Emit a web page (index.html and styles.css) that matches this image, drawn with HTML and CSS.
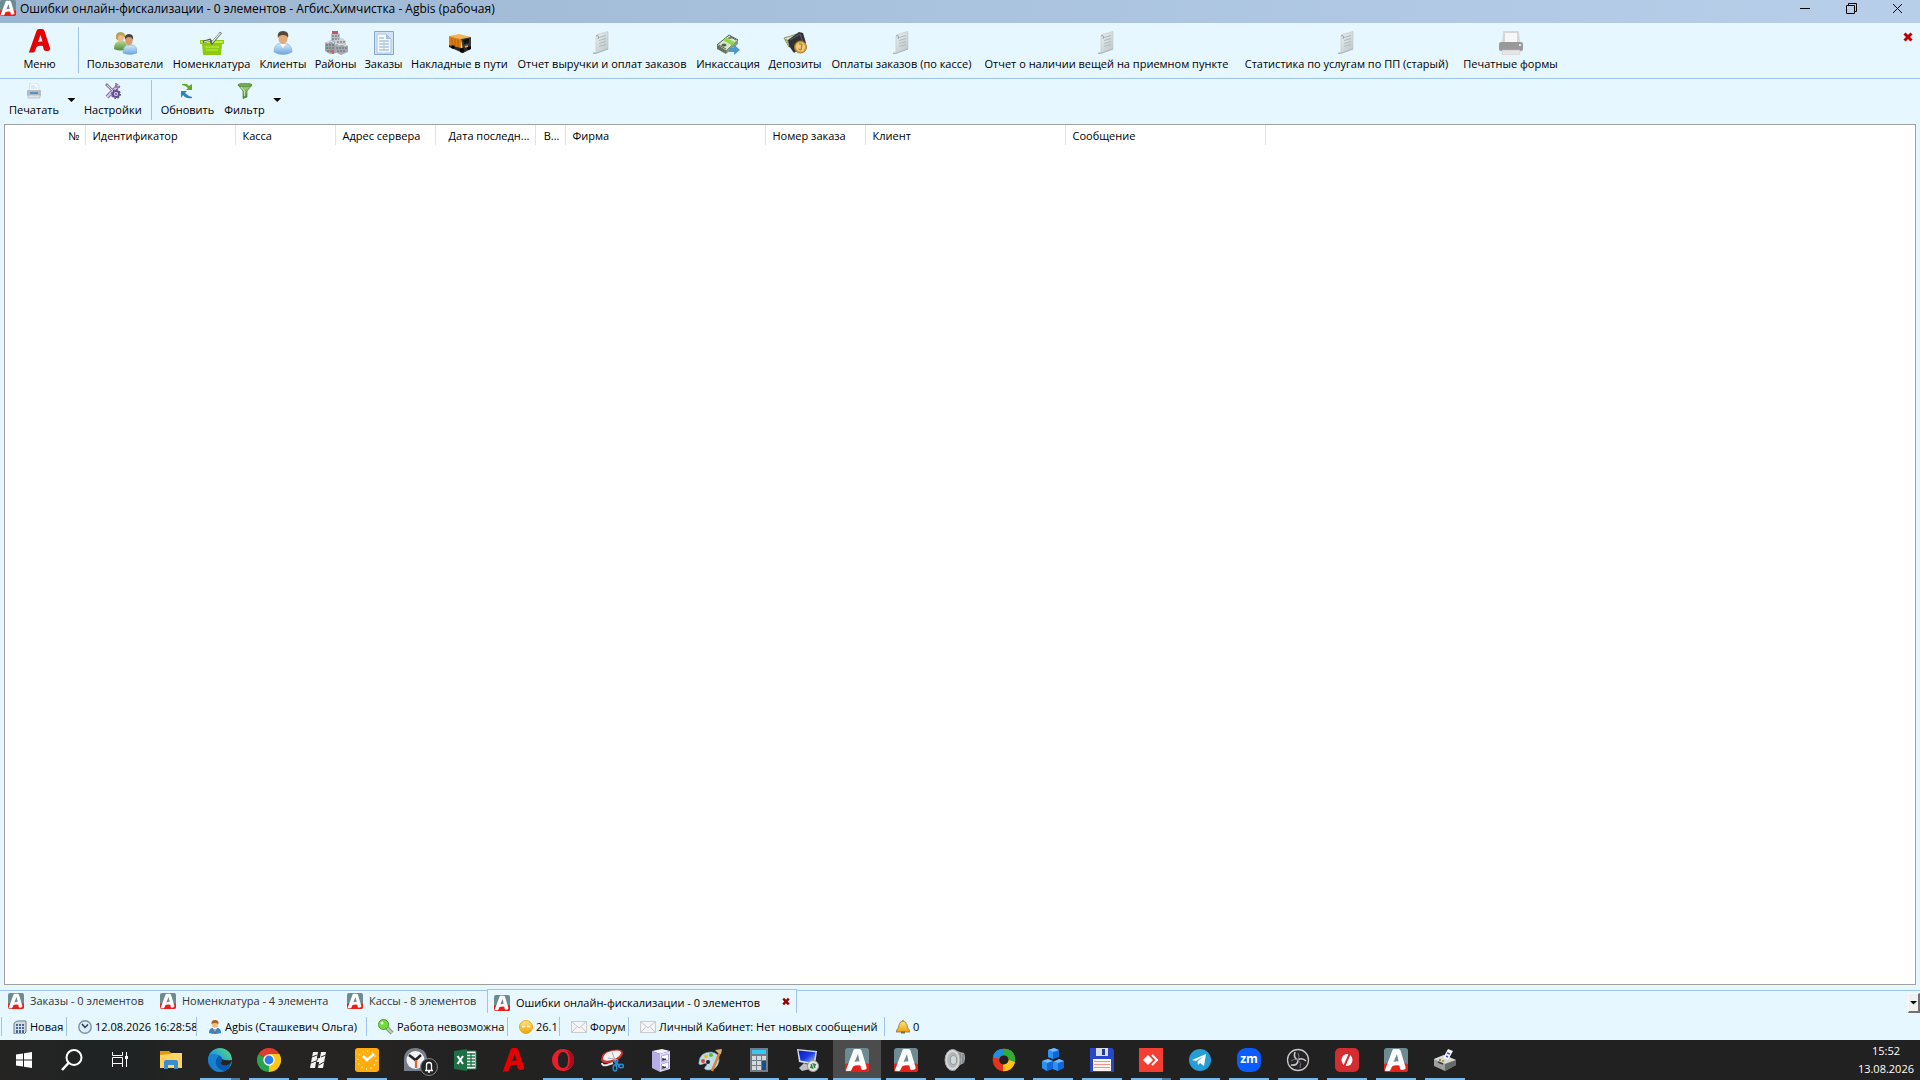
FILE: index.html
```html
<!DOCTYPE html>
<html lang="ru">
  <head>
    <meta charset="UTF-8" />
    <meta name="viewport" content="width=device-width, initial-scale=1.0" />
    <title>Ошибки онлайн-фискализации - Агбис.Химчистка</title>
    <link rel="stylesheet" href="styles.css">
  </head>
  <body>
    <!-- shared icons -->
    <svg class="sprite" aria-hidden="true">
      <defs>
        <linearGradient id="gDoc" x1="0" y1="0" x2="1" y2="1">
          <stop offset="0" stop-color="#f3f6f7" />
          <stop offset="1" stop-color="#b9c3c6" />
        </linearGradient>
        <linearGradient id="gBlue" x1="0" y1="0" x2="0" y2="1">
          <stop offset="0" stop-color="#d3e9fb" />
          <stop offset="1" stop-color="#6ba6dc" />
        </linearGradient>
        <linearGradient id="gGreen" x1="0" y1="0" x2="0" y2="1">
          <stop offset="0" stop-color="#b4d98c" />
          <stop offset="1" stop-color="#4f8c3a" />
        </linearGradient>
        <linearGradient id="gGold" x1="0" y1="0" x2="0" y2="1">
          <stop offset="0" stop-color="#ffe680" />
          <stop offset="1" stop-color="#f0a202" />
        </linearGradient>
        <linearGradient id="gEdge" x1="0" y1="1" x2="1" y2="0">
          <stop offset="0" stop-color="#0a5fc0" />
          <stop offset="0.5" stop-color="#1fa3dc" />
          <stop offset="1" stop-color="#6be05a" />
        </linearGradient>
        <linearGradient id="gScreen" x1="0" y1="0" x2="1" y2="1">
          <stop offset="0" stop-color="#0a18c8" />
          <stop offset="0.5" stop-color="#1a3ce0" />
          <stop offset="1" stop-color="#9cc4ff" />
        </linearGradient>
      </defs>
      <symbol id="logo" viewBox="0 0 24 24">
        <rect width="24" height="24" rx="3" fill="#6f8b92" />
        <path d="M0 16Q12 11 24 16V21Q24 24 21 24H3Q0 24 0 21z" fill="#e8201c" />
        <path d="M1 22L8.500 2Q9 1 10 1H14.500Q16 1 16.500 2.500L21.500 19Q22 21 20.500 21.500L18 22Q16.500 22 16 20.500L15.500 17.500Q11 16.500 8 18.500L6.500 22Q6 23 4.500 23H2Q.6 23 1 22zM13 6L9.500 14Q12 13 14.500 13.500z" fill="#fff" />
      </symbol>
      <symbol id="letter" viewBox="0 0 24 24">
        <path d="M1 23L8.500 2Q9 0 11 0H14Q16 0 16.500 2L22 19Q22.500 21.500 20 22H18Q16 22 15.500 20L15 17Q11 16 8.500 18L7 22Q6.500 23.500 5 23.500H2Q.5 24 1 23zM12.500 6L10 13Q12 12.200 14.500 12.500z" fill="#e60000" />
      </symbol>
      <symbol id="report" viewBox="0 0 24 24">
        <path d="M6 5Q7 3 9 3L18 .5V18L7 22Q5 23.500 3 22L6 21z" fill="url(#gDoc)" stroke="#c2cbce" stroke-width=".7" />
        <path d="M3 22.500Q6 23 8 21.500L18 18" fill="none" stroke="#a9b4b8" />
        <path d="M6 5Q8 3 8.500 6L8 8" fill="none" stroke="#94a3a8" />
        <path d="M9 6.500L16 4.500M9 9.500L16 7.500M9 12.500L16 10.500M9 15.500L16 13.500" stroke="#a8b5ba" stroke-width=".9" />
      </symbol>
      <symbol id="person" viewBox="0 0 24 24">
        <path d="M3 21Q3 13 9 12.500H15Q21 14 21 21Q12 26 3 21z" fill="url(#gBlue)" stroke="#78a7d4" stroke-width=".6" />
        <path d="M9 12.500L12 17L15 12.500z" fill="#fff" />
        <ellipse cx="12" cy="7.500" rx="4.500" ry="5.800" fill="#e0ae7e" />
        <path d="M7 7Q5.500 0 12 0T17 7Q16 4 12 4T7 7z" fill="#5a4636" />
      </symbol>
      <symbol id="mail" viewBox="0 0 16 12">
        <rect x=".5" y=".5" width="15" height="11" fill="#f5f5f5" stroke="#c9cdd0" />
        <path d="M1 1L8 7L15 1M1 11L6 5.500M15 11L10 5.500" fill="none" stroke="#c3c7ca" />
      </symbol>
      <symbol id="redx" viewBox="0 0 10 10">
        <path d="M1.500 1.500L8.500 8.500M8.500 1.500L1.500 8.500" stroke="currentColor" stroke-width="3" />
      </symbol>
    </svg>

    <header class="titlebar">
      <svg class="i16"><use href="#logo" /></svg>
      <h1>Ошибки онлайн-фискализации - 0 элементов - Агбис.Химчистка - Agbis (рабочая)</h1>
      <button aria-label="Свернуть"><svg viewBox="0 0 11 11"><path d="M0 5.500H10" /></svg></button>
      <button aria-label="Восстановить"><svg viewBox="0 0 11 11"><path d="M.5 2.500H8.500V10.500H.5zM2.500 2.500V.5H10.500V8.500H8.500" /></svg></button>
      <button aria-label="Закрыть"><svg viewBox="0 0 11 11"><path d="M1 1L10 10M10 1L1 10" /></svg></button>
    </header>

    <nav class="main-toolbar">
      <button class="tool menu"><svg class="i24"><use href="#letter" /></svg>Меню</button>
      <span class="sep"></span>
      <button class="tool">
        <svg class="i24" viewBox="0 0 24 24">
          <path d="M1 18Q1 11 6 10H11Q14 11 14 18Q7 21 1 18z" fill="url(#gGreen)" />
          <ellipse cx="7.500" cy="6.500" rx="3.500" ry="4.800" fill="#e7bd8b" />
          <path d="M3 8Q2 1 7.500 1T12 7Q10 4 7.500 4Q5 4 5 9z" fill="#b9a35a" />
          <path d="M10 22Q10 15 14 14H20Q24 15 24 22Q17 25 10 22z" fill="url(#gBlue)" stroke="#6f9fce" stroke-width=".5" />
          <ellipse cx="16" cy="9.500" rx="3.700" ry="4.800" fill="#d69f72" />
          <path d="M12 9Q11 3 16 3T20 9Q19 6 16 6T12 9z" fill="#4b4039" />
        </svg>Пользователи
      </button>
      <button class="tool">
        <svg class="i24" viewBox="0 0 24 24">
          <path d="M0 9H24V13H22L21 24H3L2 13H0z" fill="#8ccb10" />
          <path d="M1 10H23V12H1z" fill="#c1ec3d" />
          <path d="M5 16H19M6 19H18" stroke="#b5e33a" stroke-width="1.500" />
          <path d="M3 11L10 9L12 12L21 1.500" fill="none" stroke="#535b60" stroke-width="2.400" />
          <path d="M4 11L10 9.500M12 11.500L20.500 2" stroke="#e7ecef" stroke-width="1.200" />
        </svg>Номенклатура
      </button>
      <button class="tool"><svg class="i24"><use href="#person" /></svg>Клиенты</button>
      <button class="tool">
        <svg class="i24" viewBox="0 0 24 24">
          <path d="M7 3L12 1L16 3V12H7z" fill="#b9bfc4" />
          <path d="M8 0H14V3H8z" fill="#c55560" />
          <path d="M1 12L7 9L12 12V22L6 23L1 20z" fill="#9ca3aa" />
          <path d="M11 9L18 7L22 10V15L11 14z" fill="#cbd0d4" />
          <path d="M11 14L18 12L24 15V21L17 24L11 21z" fill="#a4a9b2" />
          <path d="M2 14H11M2 17H11M3 20H10M12 17H23M13 20H22M8 5H15M8 8H15M13 11H21" stroke="#5d656d" stroke-dasharray="2 1" />
          <path d="M3 12L7 10L10 12M14 14L18 13L22 15" fill="none" stroke="#efefef" />
          <path d="M8 19H10V23H8z" fill="#c4656c" />
        </svg>Районы
      </button>
      <button class="tool">
        <svg class="i24" viewBox="0 0 24 24">
          <path d="M2.500.5H21.500V23.500H2.500z" fill="#d5e4f4" stroke="#85a7cf" />
          <path d="M5 3H14L19 8V22H5z" fill="#f5faff" stroke="#a9c2df" />
          <path d="M14 3V8H19z" fill="#a5c1e3" />
          <path d="M7 7H12M7 10H17M7 13H17M7 16H17M7 19H17" stroke="#8fa9c8" />
          <path d="M12 9V20" stroke="#b4c7df" />
        </svg>Заказы
      </button>
      <button class="tool">
        <svg class="i24" viewBox="0 0 24 24">
          <path d="M1 5L11 3L23 6L13 8z" fill="#f4b54c" />
          <path d="M1 5L13 8V18L1 14z" fill="#df7c14" />
          <path d="M13 8L23 6V17L15 20z" fill="#3c3b3b" />
          <path d="M15 9L21 7.500V12L16 13z" fill="#131313" />
          <path d="M1 14L13 17L23 15V18L15 22L1 16z" fill="#292929" />
          <path d="M4 7V14M7 8V15M10 9V16" stroke="#b75d08" />
          <circle cx="5" cy="16" r="1.800" /><circle cx="14" cy="19.500" r="2.300" /><circle cx="21" cy="17" r="1.800" />
          <path d="M17 16L20 15" stroke="#f2b54b" stroke-width="1.500" />
        </svg>Накладные в пути
      </button>
      <button class="tool"><svg class="i24"><use href="#report" /></svg>Отчет выручки и оплат заказов</button>
      <button class="tool">
        <svg class="i24" viewBox="0 0 24 24">
          <path d="M1 14L13 4L22 9L10 20z" fill="#dbe5cf" stroke="#4c5c48" />
          <path d="M1 14V18L10 23V20z" fill="#65745b" />
          <path d="M10 20V23L22 13V9z" fill="#8c9b80" />
          <path d="M7 9L10 6.500L19 11.500L16 14.500z" fill="#8ed943" />
          <path d="M3 14L10 18M14 5.500L20 9" stroke="#53634e" />
          <ellipse cx="14" cy="7" rx="2" ry="1" fill="#75826a" />
          <ellipse cx="8" cy="14" rx="2.500" ry="1.600" fill="#53634e" />
          <path d="M13 17H18V13.500L24 19L18 24V21H13z" fill="#4b99ce" />
        </svg>Инкассация
      </button>
      <button class="tool">
        <svg class="i24" viewBox="0 0 24 24">
          <path d="M1 7L14 3L17 8L6 16z" fill="#d9dfbb" stroke="#87996a" />
          <path d="M2 9Q5 8 5 12" fill="none" stroke="#6d8452" />
          <path d="M5 9L16 1L20 2L23 12L11 22L6 15z" fill="#303136" />
          <path d="M7 9L17 3L20 11" fill="none" stroke="#63656d" />
          <circle cx="17.500" cy="16" r="6" fill="#d9a441" stroke="#a87625" />
          <circle cx="17.500" cy="16" r="4.500" fill="#f0c979" />
          <path d="M16 13L19 13L18 19L15.500 18" fill="none" stroke="#a37126" />
        </svg>Депозиты
      </button>
      <button class="tool"><svg class="i24"><use href="#report" /></svg>Оплаты заказов (по кассе)</button>
      <button class="tool"><svg class="i24"><use href="#report" /></svg>Отчет о наличии вещей на приемном пункте</button>
      <button class="tool"><svg class="i24"><use href="#report" /></svg>Статистика по услугам по ПП (старый)</button>
      <button class="tool">
        <svg class="i24" viewBox="0 0 24 24">
          <path d="M4 1Q4 0 5 0H19Q20 0 20 1L21 12H3z" fill="#d7d7d7" />
          <path d="M6 2H18V11H6z" fill="#f7f7f7" />
          <path d="M2 11H22Q24 11 24 14V18Q24 20 22 20H2Q0 20 0 18V14Q0 11 2 11z" fill="#999" />
          <path d="M3 19H21V22Q21 24 19 24H5Q3 24 3 22z" fill="#e5e5e5" stroke="#c0c0c0" stroke-width=".5" />
          <circle cx="21" cy="14" r="1" fill="#fff" />
        </svg>Печатные формы
      </button>
      <button class="close-page" aria-label="Закрыть окно"><svg class="i10"><use href="#redx" /></svg></button>
    </nav>

    <div class="page-toolbar">
      <button class="tool print">
        <svg class="i16" viewBox="0 0 16 16">
          <path d="M4 0H10L13 3V8H3z" fill="#f5f9fd" stroke="#c3ced9" stroke-width=".6" />
          <path d="M5 3H9M5 5H11" stroke="#cad6e2" />
          <path d="M2 7H14Q15 7 15 8V12Q15 13 14 13H2Q1 13 1 12V8Q1 7 2 7z" fill="#b3bbc3" />
          <path d="M4 9H12V11H4z" fill="#5793c7" />
          <path d="M2 12H14V15H2z" fill="#e0e4e8" stroke="#a7afb7" stroke-width=".6" />
        </svg>Печатать
      </button>
      <button class="drop" aria-label="Варианты печати"><span class="arrow"></span></button>
      <button class="tool">
        <svg class="i16" viewBox="0 0 16 16">
          <path d="M1 1L9 9" stroke="#8672a8" stroke-width="2.500" />
          <path d="M14 2L2 14" stroke="#8672a8" stroke-width="4" />
          <path d="M14 2L2 14" stroke="#d9c8ee" stroke-width="2" />
          <path d="M11 0V4L15 4" fill="none" stroke="#8672a8" stroke-width="1.500" />
          <path d="M2 2L8 8" stroke="#e4dcf2" />
          <circle cx="11" cy="11" r="3" fill="#e8e0f5" stroke="#62518d" stroke-width="2" />
          <circle cx="11" cy="11" r="4.400" fill="none" stroke="#62518d" stroke-width="1.200" stroke-dasharray="1.800 1.600" />
          <circle cx="11" cy="11" r="1" fill="#62518d" />
        </svg>Настройки
      </button>
      <span class="sep"></span>
      <button class="tool">
        <svg class="i16" viewBox="0 0 16 16">
          <path d="M3 1Q8 0 10 3L13 1V7H7L9 5Q6 2 3 2z" fill="#60a928" />
          <path d="M2 8H8L6 10Q9 13 13 14V15Q7 16 4 12L2 15z" fill="#2e83b6" />
        </svg>Обновить
      </button>
      <button class="tool">
        <svg class="i16" viewBox="0 0 16 16">
          <path d="M1 2L6 8V15.500L10 14V8L15 2z" fill="url(#gGreen)" stroke="#458131" stroke-width=".7" />
          <ellipse cx="8" cy="2" rx="7" ry="1.800" fill="#73ad54" stroke="#458131" stroke-width=".7" />
          <path d="M4 4L7.500 8V13" fill="none" stroke="#c8e5ac" />
        </svg>Фильтр
      </button>
      <button class="drop" aria-label="Варианты фильтра"><span class="arrow"></span></button>
    </div>

    <main class="grid-panel">
      <table>
        <thead>
          <tr>
            <th class="w-num right">№</th>
            <th class="w-id">Идентификатор</th>
            <th class="w-100">Касса</th>
            <th class="w-100">Адрес сервера</th>
            <th class="w-100 right">Дата последн...</th>
            <th class="w-30 right">В...</th>
            <th class="w-200">Фирма</th>
            <th class="w-100">Номер заказа</th>
            <th class="w-200">Клиент</th>
            <th class="w-200">Сообщение</th>
            <td></td>
          </tr>
        </thead>
      </table>
    </main>

    <nav class="tabs">
      <a class="tab" href="#orders"><svg class="i16"><use href="#logo" /></svg>Заказы - 0 элементов</a>
      <a class="tab" href="#items"><svg class="i16"><use href="#logo" /></svg>Номенклатура - 4 элемента</a>
      <a class="tab" href="#desks"><svg class="i16"><use href="#logo" /></svg>Кассы - 8 элементов</a>
      <div class="tab active">
        <svg class="i16"><use href="#logo" /></svg>Ошибки онлайн-фискализации - 0 элементов
        <button aria-label="Закрыть вкладку"><svg viewBox="0 0 10 10"><use href="#redx" /></svg></button>
      </div>
      <button class="tab-list" aria-label="Список вкладок"><span class="arrow"></span></button>
    </nav>

    <footer class="status">
      <span class="cell">
        <svg viewBox="0 0 14 14">
          <path d="M1 3L4 1H13V12L11 14H1z" fill="#d3dae2" stroke="#707b89" />
          <path d="M3 4H11V13H3z" fill="#46648d" />
          <path d="M3 6.500H11M3 9.500H11M5.500 4V13M8.500 4V13" stroke="#d9e4f3" />
        </svg>Новая
      </span>
      <span class="cell">
        <svg viewBox="0 0 14 14">
          <circle cx="7" cy="7" r="6.200" fill="#dcecf8" stroke="#7892a8" stroke-width="1.400" />
          <path d="M4 4L7 7.500L10 4.500" fill="none" stroke="#24394b" stroke-width="1.500" />
        </svg>12.08.2026 16:28:58
      </span>
      <span class="cell">
        <svg viewBox="0 0 14 14">
          <path d="M1 13Q1 8 5 8H9Q13 8 13 13Q7 15 1 13z" fill="#3384c9" />
          <path d="M5 8L7 12L9 8z" fill="#fff" /><path d="M7 9V13" stroke="#d53a30" />
          <circle cx="7" cy="4.500" r="3.200" fill="#f2bd7d" />
          <path d="M3.500 4Q3 0 7 0T10.500 4Q7 2 3.500 4z" fill="#a8651e" />
        </svg>Agbis (Сташкевич Ольга)
      </span>
      <span class="cell">
        <svg class="i16" viewBox="0 0 16 16">
          <path d="M7 7L14 14" stroke="#839b78" stroke-width="4" /><path d="M7 7L14 14" stroke="#bdcdb4" stroke-width="2" />
          <circle cx="5.500" cy="5.500" r="5" fill="#73da3d" stroke="#3fa31c" />
          <circle cx="4" cy="4" r="1.500" fill="#f2ffe8" />
        </svg>Работа невозможна
      </span>
      <span class="cell">
        <svg viewBox="0 0 14 14">
          <circle cx="7" cy="7" r="6.500" fill="url(#gGold)" stroke="#e8a81d" />
          <path d="M3 6.500H6M8 6.500H11" stroke="#fff6cf" stroke-width="1.500" />
        </svg>26.1
      </span>
      <span class="cell"><svg class="mail"><use href="#mail" /></svg>Форум</span>
      <span class="cell"><svg class="mail"><use href="#mail" /></svg>Личный Кабинет: Нет новых сообщений</span>
      <span class="cell">
        <svg viewBox="0 0 14 14">
          <path d="M0 11Q3 8 3 5Q4 1 7 1T11 5Q11 8 14 11V12H0z" fill="url(#gGold)" stroke="#8c7646" stroke-width=".8" />
          <path d="M5 12.500H9" stroke="#726b60" stroke-width="2" /><circle cx="7" cy="1" r="1" fill="#a9925f" />
        </svg>0
      </span>
    </footer>

    <footer class="taskbar">
      <button class="sys" aria-label="Пуск">
        <svg viewBox="0 0 24 24"><path d="M4 6.500L11 5.500V11.500H4zM12 5.300L20 4V11.500H12zM4 12.500H11V18.500L4 17.500zM12 12.500H20V20L12 18.700z" fill="#fff" /></svg>
      </button>
      <button class="sys" aria-label="Поиск">
        <svg viewBox="0 0 24 24"><circle cx="14" cy="9.500" r="7.500" fill="none" stroke="#fff" stroke-width="2" /><path d="M8.500 15L2 22" stroke="#fff" stroke-width="2.500" /></svg>
      </button>
      <button class="sys" aria-label="Представление задач">
        <svg viewBox="0 0 24 24"><path d="M4.500 4V7.500H14.500V4M4.500 19V15.500H14.500V19M4.500 9.500H14.500V15.500H4.500zM18.500 4V19" fill="none" stroke="#fff" /><path d="M17 8H20V11H17z" fill="#fff" /></svg>
      </button>
      <div class="apps">
        <button class="app" aria-label="Проводник">
          <svg viewBox="0 0 24 24"><path d="M1 3H10L12 5H23V20H1z" fill="#e39b0c" /><path d="M1 7L11 6L13 5H23V20H1z" fill="#ffd460" /><path d="M5 21V14Q5 12 7 12H17Q19 12 19 14V21H15V17H9V21z" fill="#3a8ecf" /></svg>
        </button>
        <button class="app run many" aria-label="Edge">
          <svg viewBox="0 0 24 24"><circle cx="12" cy="12" r="12" fill="url(#gEdge)" /><path d="M0 11Q3 5 9 7Q15 8 14 12Q14 14 12 15Q14 18 20 16L23 15.500Q20 24 12 24Q0 23 0 11z" fill="#0b58ae" /><path d="M1 8Q6 4 11 8Q7 11 8 16T16 23Q8 26 3 19T1 8z" fill="#1682d0" /><path d="M12 15Q14 14 14 11Q17 13 24 12Q24 16 19 17Q14 18 12 15z" fill="#242323" /></svg>
        </button>
        <button class="app run" aria-label="Chrome">
          <svg viewBox="0 0 24 24"><path d="M12 12L1.600 6A12 12 0 0 1 22.400 6z" fill="#e33b2e" /><path d="M12 12L22.400 6A12 12 0 0 1 12 24z" fill="#fdc814" /><path d="M12 12L12 24A12 12 0 0 1 1.600 6z" fill="#2ba24c" /><path d="M12 6H22.400L17.200 15L12 24L14 14z" fill="#fdc814" /><circle cx="12" cy="12" r="5.700" fill="#fff" /><circle cx="12" cy="12" r="4.400" fill="#2b7de9" /></svg>
        </button>
        <button class="app run" aria-label="Заметки">
          <svg viewBox="0 0 24 24"><path d="M7 4L12 4L9 20H4zM15 4H20L17 20H12zM8 10H17V14H7z" fill="#f3f3f3" /><path d="M6 9L11 7M5 15L10 13M15 9L20 7M13 17L18 14M10 14L12 10" stroke="#333" /></svg>
        </button>
        <button class="app run" aria-label="Учёт времени">
          <svg viewBox="0 0 24 24"><rect width="24" height="24" rx="3" fill="#ffae0d" /><circle cx="12" cy="12" r="9" fill="none" stroke="#fff2c6" stroke-width="1.500" stroke-dasharray="1 3.700" /><path d="M8 8L12 12L19 6" fill="none" stroke="#fff" stroke-width="2.500" /></svg>
        </button>
        <button class="app" aria-label="Часы">
          <svg viewBox="0 0 24 24"><path d="M0 23V12Q0 0 12 0Q23 1 23 12L20 23z" fill="#77808a" /><circle cx="11.500" cy="12" r="9" fill="#f1f3f5" /><path d="M5 7L11.500 12L17 7" fill="none" stroke="#222" stroke-width="2.500" /><path d="M12 12V20" stroke="#f15a24" stroke-width="2.200" /></svg>
          <span class="badge"><svg viewBox="0 0 16 16"><path d="M4 11.500H12M5.500 11V6Q5.500 3.500 8 3.500T10.500 6V11M7 13H9" fill="none" stroke="#fff" stroke-width="1.300" /></svg></span>
        </button>
        <button class="app" aria-label="Excel">
          <svg viewBox="0 0 24 24"><path d="M11 3H23V21H11z" fill="#fff" stroke="#20744a" /><path d="M14 6H22M14 9H22M14 12H22M14 15H22M14 18H22M18 5V19" stroke="#20744a" stroke-width="1.300" /><path d="M1 3L14 1V23L1 21z" fill="#1d7044" /><path d="M4.500 8L10 16M10 8L4.500 16" stroke="#fff" stroke-width="2" /></svg>
        </button>
        <button class="app" aria-label="Агбис"><svg><use href="#letter" /></svg></button>
        <button class="app run" aria-label="Opera">
          <svg viewBox="0 0 24 24"><path d="M12 1A11 11 0 1 0 12 23A11 11 0 1 0 12 1zM12 4Q17 4 17 12T12 20T7 12T12 4z" fill="#e5202c" fill-rule="evenodd" /><path d="M15 2Q23 5 23 12T15 22Q19 18 19 12T15 2z" fill="#a70d1d" /></svg>
        </button>
        <button class="app run" aria-label="Ножницы">
          <svg viewBox="0 0 24 24"><path d="M1 12Q1 4 12 2Q23 0 23 5Q23 10 13 14Q2 17 1 12z" fill="#ca3431" /><path d="M3 11Q3 5 12 3Q21 1.500 21 5Q20 9 12 12Q4 14 3 11z" fill="#f5f3f1" /><path d="M2 15Q2 18 7 17L13 15" fill="none" stroke="#e8e8e8" stroke-width="2" /><path d="M12 4L16 15M8 10L18 12" stroke="#a6acb0" /><path d="M14 13L20 18M18 12L15 18" stroke="#248dd4" stroke-width="2" /><ellipse cx="15" cy="20" rx="1.800" ry="3" fill="none" stroke="#248dd4" stroke-width="1.500" /><ellipse cx="21" cy="18" rx="2.500" ry="1.700" fill="none" stroke="#248dd4" stroke-width="1.500" /></svg>
        </button>
        <button class="app run" aria-label="Картотека">
          <svg viewBox="0 0 24 24"><path d="M3 3L13 1L21 3L11 6z" fill="#f2efff" /><path d="M3 3L11 6V24L3 20z" fill="#b8ace6" /><path d="M11 6L21 3V21L11 24z" fill="#e1dcf8" /><path d="M12.500 8L19.500 6V12L12.500 14zM12.500 16L19.500 14V20L12.500 22z" fill="#fff" stroke="#9489c6" stroke-width=".7" /><path d="M14 10V12L17 11M14 18V20L17 19" fill="none" stroke="#332f50" stroke-width="1.500" /></svg>
        </button>
        <button class="app run" aria-label="Paint">
          <svg viewBox="0 0 24 24"><path d="M1 14Q2 4 13 4Q22 5 21 13Q19 23 9 22Q4 21 9 17Q9 14 5 16Q0 18 1 14z" fill="#bddcec" stroke="#7faac0" stroke-width=".6" /><circle cx="5" cy="13" r="2" fill="#e7453b" /><circle cx="8" cy="8.500" r="2" fill="#e8c12c" /><circle cx="13" cy="7" r="2" fill="#5dbb35" /><circle cx="10" cy="14" r="2" fill="#242424" /><path d="M22 4L14 23" stroke="#e0822c" stroke-width="2.500" /><path d="M17 2L24 1L23 6L20 5z" fill="#dcb478" /></svg>
        </button>
        <button class="app run" aria-label="Калькулятор">
          <svg viewBox="0 0 24 24"><path d="M3 0H21V24H3z" fill="#727d87" /><path d="M5 2H19V6H5z" fill="#33c9f5" /><path d="M5 8H9V12H5zM10 8H14V12H10zM15 8H19V12H15zM5 13H9V17H5zM10 13H14V17H10zM5 18H9V22H5zM10 18H14V22H10z" fill="#d6d9db" /><path d="M15 13H19V22H15z" fill="#174f88" /></svg>
        </button>
        <button class="app run" aria-label="Удалённый рабочий стол">
          <svg viewBox="0 0 24 24"><path d="M8 15L14 18V21L6 23L3 20z" fill="#bcc0c4" /><path d="M1 1L21 3L19 17L3 14z" fill="#d5dbe2" /><path d="M2.500 2.500L19.500 4.300L17.500 15L4.500 12.500z" fill="url(#gScreen)" /><circle cx="17" cy="18" r="5.500" fill="#e4e6e4" stroke="#969c96" /><path d="M14 19L16.500 20L15 16M20 17L17.500 16L19 20" fill="none" stroke="#338544" stroke-width="1.500" /></svg>
        </button>
        <button class="app run current" aria-label="Агбис.Химчистка"><svg><use href="#logo" /></svg></button>
        <button class="app run" aria-label="Агбис.Химчистка 2"><svg><use href="#logo" /></svg></button>
        <button class="app run" aria-label="Звук">
          <svg viewBox="0 0 24 24"><path d="M10 1L17 4L21 5Q23 9 21 15L17 17L11 23z" fill="#a3a8aa" /><path d="M17 5V16M20 6V15" stroke="#6f7477" /><ellipse cx="9.500" cy="12" rx="7.500" ry="10.500" fill="#d8dbdc" stroke="#a2a7aa" /><ellipse cx="9.500" cy="12" rx="5.500" ry="8" fill="#b3b8ba" /><ellipse cx="10.500" cy="12" rx="3.200" ry="4.500" fill="#d3d6d8" stroke="#92979a" /></svg>
        </button>
        <button class="app run" aria-label="Обозреватель">
          <svg viewBox="0 0 24 24"><circle cx="12" cy="12" r="8" fill="none" stroke="#e9311c" stroke-width="6.500" /><path d="M4 10Q5 4 12 4" fill="none" stroke="#208fe3" stroke-width="6.500" /><path d="M12 4Q20 4 20 13" fill="none" stroke="#2fae35" stroke-width="6.500" /><path d="M20 13Q18 20 11 20" fill="none" stroke="#ffc514" stroke-width="6.500" /></svg>
        </button>
        <button class="app run" aria-label="Кубы">
          <svg viewBox="0 0 24 24"><path d="M7 2L13 0L18 2V9L12 11L7 9zM1 13L7 11L12 13V21L6 23L1 20zM12 14L18 11L23 13V20L17 23L12 21z" fill="#1168d4" /><path d="M7 2L13 0L18 2L12 4zM1 13L7 11L12 13L6 15zM12 14L18 11L23 13L17 15z" fill="#73bbff" /><path d="M7 2L12 4V11L7 9zM1 13L6 15V23L1 20zM12 14L17 15V23L12 21z" fill="#2c91f5" /></svg>
        </button>
        <button class="app run" aria-label="Файлы">
          <svg viewBox="0 0 24 24"><path d="M0 0H22L24 2V24H0z" fill="#2847c6" /><path d="M6 0H18V8H6z" fill="#d7dce5" /><path d="M12 1H15V7H12z" fill="#273c99" /><path d="M3 11H21V23H3z" fill="#fff3ee" /><path d="M4 13.500H20M4 16.500H20M4 19.500H20" stroke="#ec9590" /></svg>
        </button>
        <button class="app run many" aria-label="AnyDesk">
          <svg viewBox="0 0 24 24"><path d="M0 0H24V24H0z" fill="#f53e33" /><path d="M4 12L9 7L14 12L9 17z" fill="#fff" /><path d="M13 7L18 12L13 17" fill="none" stroke="#fff" stroke-width="2" /></svg>
        </button>
        <button class="app run" aria-label="Telegram">
          <svg viewBox="0 0 24 24"><circle cx="12" cy="12" r="11" fill="#259dd5" /><path d="M4 12L18 6L16 18L12 15L10 17L9.500 13.500L15 8.500L8 13z" fill="#fff" /></svg>
        </button>
        <button class="app run zoom-app" aria-label="Zoom"><span>zm</span></button>
        <button class="app run" aria-label="OBS">
          <svg viewBox="0 0 24 24"><circle cx="12" cy="12" r="10.500" fill="#252327" stroke="#c7c7c7" stroke-width="1.300" /><path d="M9 4Q7 10 12 12Q16 9 20 13M12 12Q12 18 5 17" fill="none" stroke="#c8c8c8" stroke-width="1.600" /><path d="M12 12Q8 10 5 13M12 12Q16 15 14 20M12 12Q14 8 12 5" fill="none" stroke="#77757a" /></svg>
        </button>
        <button class="app run" aria-label="Касса">
          <svg viewBox="0 0 24 24"><rect width="24" height="24" rx="5" fill="#d32c31" /><ellipse cx="12" cy="12" rx="5.500" ry="6" fill="#fff" /><path d="M15 5L9 19" stroke="#d32c31" stroke-width="2" /></svg>
        </button>
        <button class="app run" aria-label="Агбис"><svg><use href="#logo" /></svg></button>
        <button class="app run" aria-label="Принтер">
          <svg viewBox="0 0 24 24"><path d="M1 11L11 7L23 12V17L12 23L1 18z" fill="#9da19e" /><path d="M1 11L11 7L23 12L12 16z" fill="#d7d9d5" /><path d="M12 16L23 12V17L12 23z" fill="#676b68" /><path d="M10 10L15 1L20 3L15 12z" fill="#f6f6ff" /><path d="M14 5L17 6M13 8L15 9" stroke="#4150d4" stroke-width="1.500" /><path d="M5 14L10 16" stroke="#393d39" stroke-width="1.500" /><circle cx="7" cy="12" r="1" fill="#d53a2a" /><circle cx="10" cy="13" r="1" fill="#4bb53c" /></svg>
        </button>
      </div>
      <div class="clock"><time>15:52</time><time>13.08.2026</time></div>
    </footer>
  </body>
</html>
```
FILE: styles.css
```css
* {
  box-sizing: border-box;
}
body {
  margin: 0;
  height: 100vh;
  display: flex;
  flex-direction: column;
  overflow: hidden;
  background-color: #e6f7ff;
  color: #000;
  font-family: "Open Sans", "Noto Sans", sans-serif;
  font-size: 11px;
  line-height: 16px;
}
button {
  padding: 0;
  border: none;
  background: none;
  color: inherit;
  font: inherit;
}
svg {
  display: block;
  flex: none;
}
.sprite {
  position: absolute;
  width: 0;
  height: 0;
}
.i10 {
  width: 10px;
  height: 10px;
}
.i16 {
  width: 16px;
  height: 16px;
}
.i24 {
  width: 24px;
  height: 24px;
}

/* title bar */
.titlebar {
  display: flex;
  height: 23px;
  background: linear-gradient(to right, #9bb6d2, #b8cfea);
}
.titlebar h1 {
  flex: 1;
  margin: 0;
  padding: 1px 0 0 4px;
  font-size: 12px;
  font-weight: normal;
}
.titlebar button {
  width: 46px;
  height: 16px;
  display: flex;
  align-items: center;
  justify-content: center;
}
.titlebar button svg {
  width: 11px;
  height: 11px;
  fill: none;
  stroke: #000;
}

/* toolbars */
.tool {
  display: flex;
  flex-direction: column;
  align-items: center;
}
.sep {
  width: 1px;
  background-color: #a0c4f0;
}
.main-toolbar {
  display: grid;
  grid-template-columns:
    71px 1px 78px 81px 48px 43px 39px 99px 172px 66px 54px 145px 251px
    215px 99px 1fr;
  column-gap: 7px;
  height: 56px;
  padding: 4px 7px 5px 0;
  border-bottom: 1px solid #a0c4f0;
  white-space: nowrap;
}
.main-toolbar .tool {
  padding-top: 4px;
  gap: 1px;
}
.main-toolbar .menu {
  padding: 2px 0 0 8px;
  gap: 3px;
}
.close-page {
  align-self: start;
  justify-self: end;
  margin-top: 5px;
  color: #c00000;
}
.page-toolbar {
  display: flex;
  height: 45px;
  padding: 1px 0 4px 9px;
  white-space: nowrap;
}
.page-toolbar .tool {
  padding: 3px 5px 0;
  gap: 3px;
}
.page-toolbar .print {
  padding-left: 0;
}
.page-toolbar .sep {
  margin: 0 4px;
}
.drop {
  width: 15px;
  display: flex;
  justify-content: center;
  padding-top: 18px;
}
.arrow {
  width: 8px;
  height: 4px;
  background-color: #000;
  clip-path: polygon(0 0, 100% 0, 50% 100%);
}

/* grid */
.grid-panel {
  flex: 1;
  margin: 0 4px;
  border: 1px solid #a0a0a0;
  background-color: #fff;
}
table {
  width: 100%;
  table-layout: fixed;
  border-collapse: collapse;
}
th {
  height: 20px;
  padding: 3px 5px 1px 7px;
  border-right: 1px solid #e2e2e2;
  font-weight: normal;
  text-align: left;
  white-space: nowrap;
}
.right {
  text-align: right;
}
.w-num {
  width: 80px;
}
.w-id {
  width: 150px;
}
.w-30 {
  width: 30px;
}
.w-100 {
  width: 100px;
}
.w-200 {
  width: 200px;
}

/* open pages */
.tabs {
  display: grid;
  grid-template-columns: 152px 187px 148px 310px 1fr;
  height: 24px;
  margin-top: 4px;
  color: #333;
  background: linear-gradient(#a0c4f0, #a0c4f0) 0 1px / 100% 1px no-repeat;
}
.tab {
  display: flex;
  gap: 6px;
  padding: 4px 4px 0 8px;
  color: inherit;
  text-decoration: none;
  white-space: nowrap;
}
.active {
  padding: 5px 4px 0 6px;
  border: 1px solid #a0c4f0;
  border-bottom: none;
  background-color: #e9f8ff;
  color: #000;
}
.active button {
  height: 12px;
  margin-left: auto;
  padding: 0 2px;
  color: #9b0000;
}
.active button svg {
  width: 8px;
  height: 9px;
}
.tab-list {
  width: 12px;
  height: 20px;
  margin-top: 4px;
  justify-self: end;
  display: flex;
  align-items: center;
  justify-content: center;
  border: 1px solid #f8f8f8;
  border-right: 2px solid #707070;
  border-bottom: 2px solid #707070;
  background-color: #f0f0f0;
}

/* status line */
.status {
  display: grid;
  grid-template-columns: 65px 130px 170px 141px 52px 69px 256px 1fr;
  height: 27px;
  padding: 4px 0 4px 1px;
  white-space: nowrap;
}
.cell {
  display: flex;
  align-items: center;
  gap: 3px;
  padding-left: 11px;
  border-left: 1px solid #a0c4f0;
}
.cell svg {
  width: 14px;
  height: 14px;
}
.cell .i16 {
  width: 16px;
  height: 16px;
}
.cell .mail {
  width: 16px;
  height: 12px;
}

/* taskbar */
.taskbar {
  display: flex;
  height: 40px;
  background: linear-gradient(to right, #252423, #1f2323 6%, #262423 12%, #212121 35%);
  color: #fff;
}
.sys,
.app {
  display: flex;
  align-items: center;
  justify-content: center;
  width: 48px;
  height: 40px;
}
.sys svg,
.app > svg {
  width: 24px;
  height: 24px;
}
.apps {
  display: flex;
  flex: 1;
  gap: 1px;
  padding-left: 3px;
}
.app {
  position: relative;
}
.run {
  background: linear-gradient(#76b9ed, #76b9ed) center bottom / 40px 2px no-repeat;
}
.many {
  background-image: linear-gradient(to right, #76b9ed 31px, #4e7da3 31px);
}
.current {
  background-color: #4c4c4c;
  background-size: 48px 2px;
}
.badge {
  position: absolute;
  right: 2px;
  bottom: 4px;
  width: 18px;
  height: 18px;
  border: 1px solid #888;
  border-radius: 50%;
  background-color: #252525;
}
.zoom-app span {
  width: 24px;
  height: 24px;
  border-radius: 9px;
  background-color: #0b5cff;
  font-size: 12px;
  font-weight: bold;
  line-height: 22px;
}
.clock {
  display: flex;
  flex-direction: column;
  align-items: center;
  padding: 2px 6px 0 0;
  line-height: 18px;
}
```
